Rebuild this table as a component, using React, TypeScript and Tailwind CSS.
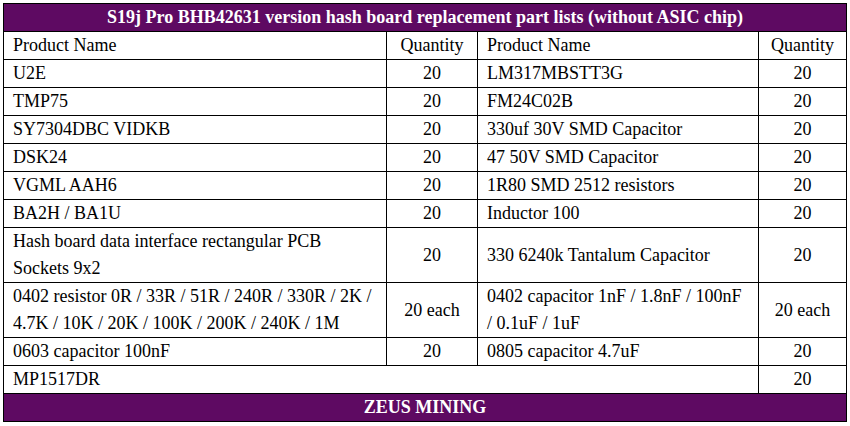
import React from "react";

const rows: [string, string, string, string][] = [
  ["U2E", "20", "LM317MBSTT3G", "20"],
  ["TMP75", "20", "FM24C02B", "20"],
  ["SY7304DBC VIDKB", "20", "330uf 30V SMD Capacitor", "20"],
  ["DSK24", "20", "47 50V SMD Capacitor", "20"],
  ["VGML AAH6", "20", "1R80 SMD 2512 resistors", "20"],
  ["BA2H / BA1U", "20", "Inductor 100", "20"],
  ["Hash board data interface rectangular PCB Sockets 9x2", "20", "330 6240k Tantalum Capacitor", "20"],
  ["0402 resistor 0R / 33R / 51R / 240R / 330R / 2K / 4.7K / 10K / 20K / 100K / 200K / 240K / 1M", "20 each", "0402 capacitor 1nF / 1.8nF / 100nF / 0.1uF / 1uF", "20 each"],
  ["0603 capacitor 100nF", "20", "0805 capacitor 4.7uF", "20"],
];

export default function App() {
  const base = "border border-black font-['Liberation_Serif','Times_New_Roman',serif] font-normal text-[18px] leading-[27px] text-black";
  const name = base + " pl-[9px] pr-2 py-0 text-left align-middle";
  const qty = base + " px-1 py-0 text-center align-middle";
  const head = "border border-black font-['Liberation_Serif','Times_New_Roman',serif] text-[18px] leading-[27px] bg-[#5e0a62] text-white font-bold text-center";
  return (
    <div className="w-[850px] h-[426px] bg-white pt-[3px] pl-[3px]">
      <table className="border-collapse table-fixed w-[843px] border border-black">
        <colgroup>
          <col className="w-[383px]" />
          <col className="w-[91px]" />
          <col className="w-[281px]" />
          <col className="w-[88px]" />
        </colgroup>
        <tbody>
          <tr className="h-[28px]">
            <td colSpan={4} className={head}>
              S19j Pro BHB42631 version hash board replacement part lists (without ASIC chip)
            </td>
          </tr>
          <tr className="h-[28px]">
            <td className={name}>Product Name</td>
            <td className={qty}>Quantity</td>
            <td className={name}>Product Name</td>
            <td className={qty}>Quantity</td>
          </tr>
          {rows.map((r, i) => (
            <tr key={i} className="h-[28px]">
              <td className={name}>{r[0]}</td>
              <td className={qty}>{r[1]}</td>
              <td className={name}>{r[2]}</td>
              <td className={qty}>{r[3]}</td>
            </tr>
          ))}
          <tr className="h-[28px]">
            <td colSpan={3} className={name}>MP1517DR</td>
            <td className={qty}>20</td>
          </tr>
          <tr className="h-[28px]">
            <td colSpan={4} className={head}>
              ZEUS MINING
            </td>
          </tr>
        </tbody>
      </table>
    </div>
  );
}
